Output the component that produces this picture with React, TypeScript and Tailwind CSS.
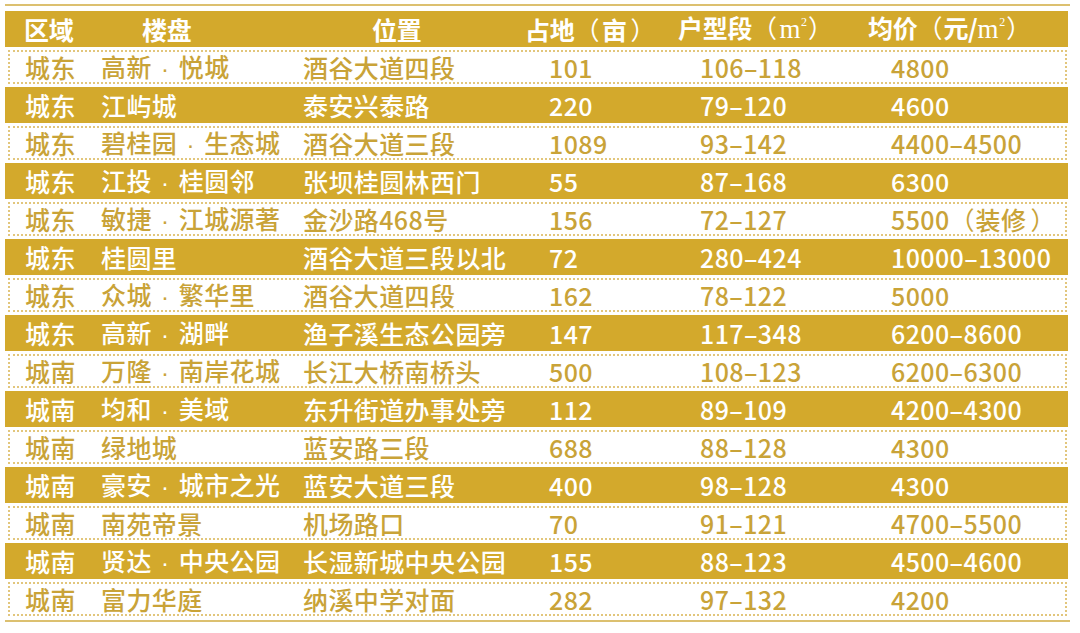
import React from "react";

const rows: string[][] = [
  ["城东", "高新 · 悦城", "酒谷大道四段", "101", "106–118", "4800"],
  ["城东", "江屿城", "泰安兴泰路", "220", "79–120", "4600"],
  ["城东", "碧桂园 · 生态城", "酒谷大道三段", "1089", "93–142", "4400–4500"],
  ["城东", "江投 · 桂圆邻", "张坝桂圆林西门", "55", "87–168", "6300"],
  ["城东", "敏捷 · 江城源著", "金沙路468号", "156", "72–127", "5500（装修）"],
  ["城东", "桂圆里", "酒谷大道三段以北", "72", "280–424", "10000–13000"],
  ["城东", "众城 · 繁华里", "酒谷大道四段", "162", "78–122", "5000"],
  ["城东", "高新 · 湖畔", "渔子溪生态公园旁", "147", "117–348", "6200–8600"],
  ["城南", "万隆 · 南岸花城", "长江大桥南桥头", "500", "108–123", "6200–6300"],
  ["城南", "均和 · 美域", "东升街道办事处旁", "112", "89–109", "4200–4300"],
  ["城南", "绿地城", "蓝安路三段", "688", "88–128", "4300"],
  ["城南", "豪安 · 城市之光", "蓝安大道三段", "400", "98–128", "4300"],
  ["城南", "南苑帝景", "机场路口", "70", "91–121", "4700–5500"],
  ["城南", "贤达 · 中央公园", "长湿新城中央公园", "155", "88–123", "4500–4600"],
  ["城南", "富力华庭", "纳溪中学对面", "282", "97–132", "4200"],
];

const font = { fontFamily: '"Noto Sans CJK SC", "Noto Sans", sans-serif' };
const serif = { fontFamily: '"Liberation Serif", serif' };
const sans = { fontFamily: '"Liberation Sans", sans-serif' };

function Name({ s }: { s: string }) {
  const parts = s.split(" · ");
  if (parts.length === 1) return <>{s}</>;
  return (
    <>
      {parts[0]}
      <span className="inline-block w-[27px] text-center font-normal text-[24px]" style={sans}>
        ·
      </span>
      {parts[1]}
    </>
  );
}

function Price({ s }: { s: string }) {
  const m = s.match(/^(.*)（(.*)）$/);
  if (!m) return <>{s}</>;
  return (
    <>
      {m[1]}
      <span className="inline-block w-[24px] text-right font-normal">（</span>
      <span className="inline-block w-[2px]" />
      {m[2]}
      <span className="inline-block w-[4px]" />
      <span className="inline-block w-[24px] font-normal">）</span>
    </>
  );
}

function Cells({ r }: { r: string[] }) {
  return (
    <>
      <div className="w-[76px] shrink-0 whitespace-nowrap">{r[0]}</div>
      <div className="w-[202px] shrink-0 whitespace-nowrap">
        <Name s={r[1]} />
      </div>
      <div className="w-[246px] shrink-0 whitespace-nowrap">{r[2]}</div>
      <div className="w-[151px] shrink-0 whitespace-nowrap">{r[3]}</div>
      <div className="w-[191px] shrink-0 whitespace-nowrap">{r[4]}</div>
      <div className="shrink-0 whitespace-nowrap">
        <Price s={r[5]} />
      </div>
    </>
  );
}

function M2() {
  return (
    <span className="font-normal text-[27px]" style={serif}>
      m<span className="inline-block text-[12px] align-[12px] ml-[1px]">2</span>
    </span>
  );
}

export default function App() {
  return (
    <div className="w-[1080px] h-[633px] bg-white overflow-hidden" style={font}>
      <div className="pt-[4px] pl-[5px]">
        <div className="w-[1065px] h-[2px] bg-[#dcc070]" />
        <div className="flex flex-col gap-[3px] mt-[5px]">
          <div className="flex items-center h-[36px] w-[1063px] bg-[#d3a92c] text-white text-[25px] font-bold pl-[19px] leading-none tracking-[-0.3px]">
            <div className="w-[118px] shrink-0">区域</div>
            <div className="w-[230px] shrink-0">楼盘</div>
            <div className="w-[153px] shrink-0">位置</div>
            <div className="w-[153px] shrink-0 whitespace-nowrap">
              占地<span className="inline-block w-[24px] font-normal">（</span>
              <span className="inline-block w-[32px] text-center">亩</span>
              <span className="inline-block w-[24px] text-right font-normal">）</span>
            </div>
            <div className="w-[190px] shrink-0 whitespace-nowrap">
              户型段<span className="inline-block w-[26px] font-normal">（</span>
              <span className="inline-block w-[30px] text-center">
                <M2 />
              </span>
              <span className="inline-block w-[24px] text-right font-normal">）</span>
            </div>
            <div className="shrink-0 whitespace-nowrap">
              均价<span className="inline-block w-[26px] font-normal">（</span>
              元/<M2 />
              <span className="inline-block w-[26px] text-right font-normal">）</span>
            </div>
          </div>
          {rows.map((r, i) =>
            i % 2 === 0 ? (
              <div
                key={i}
                className="flex items-center h-[34px] w-[1059px] ml-[3px] border-2 border-dotted border-[#e2c67c] text-[#c9a338] text-[25px] font-medium pl-[15px] leading-none tracking-[0.4px]"
              >
                <Cells r={r} />
              </div>
            ) : (
              <div
                key={i}
                className="flex items-center h-[36px] w-[1063px] bg-[#d3a92c] text-white text-[25px] font-medium pl-[20px] leading-none tracking-[0.4px]"
              >
                <Cells r={r} />
              </div>
            )
          )}
        </div>
        <div className="w-[1065px] h-[2px] bg-[#dcc070] mt-[4px]" />
      </div>
    </div>
  );
}
